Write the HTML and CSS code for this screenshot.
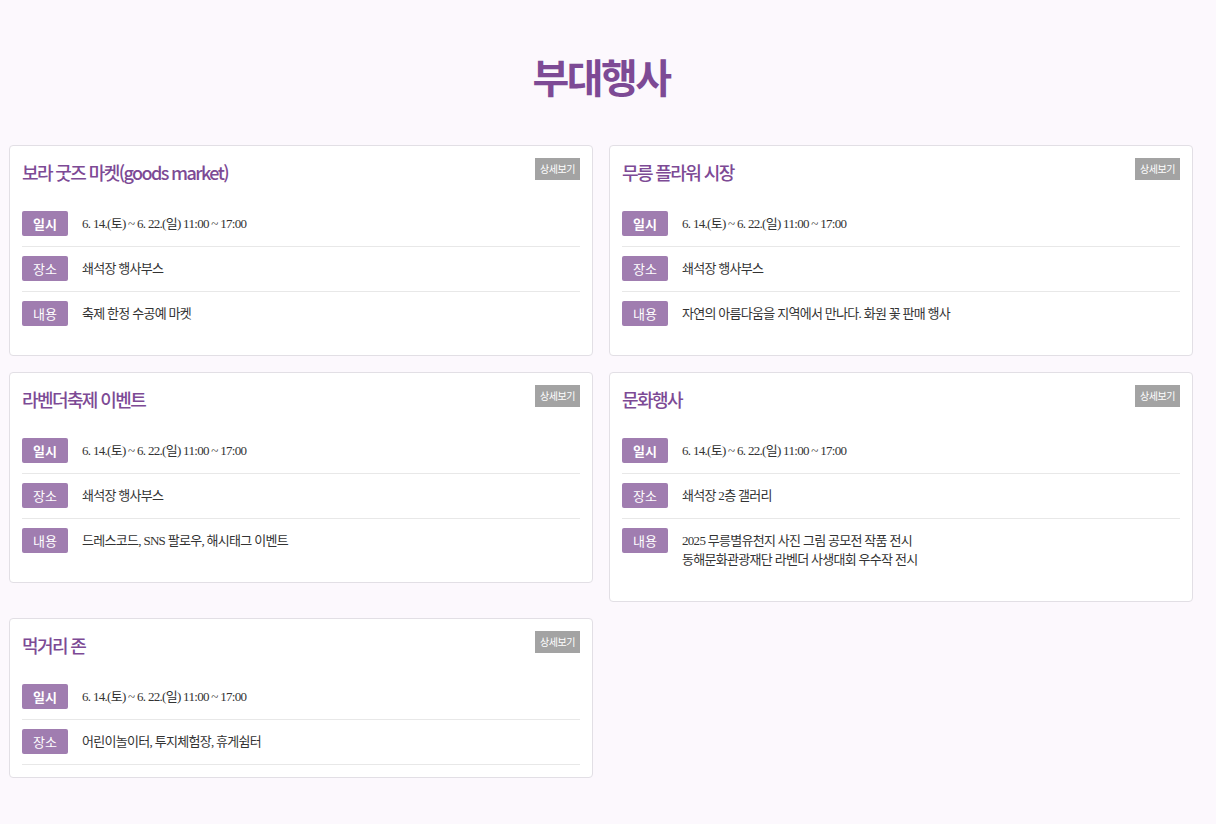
FILE: index.html
```html
<!DOCTYPE html>
<html lang="ko">
<head>
  <meta charset="UTF-8">
  <meta name="viewport" content="width=device-width, initial-scale=1.0">
  <title>부대행사</title>
  <link rel="stylesheet" href="styles.css">
</head>
<body>
  <div class="wrap">
    <h2 class="page-title">부대행사</h2>

    <div class="event-grid">
      <!-- 보라 굿즈 마켓 -->
      <div class="event-card">
        <div class="event-head">
          <h3>보라 굿즈 마켓(goods market)</h3>
          <a href="#" class="more-btn">상세보기</a>
        </div>
        <ul class="event-info">
          <li><span class="label label-strong">일시</span><p>6. 14.(토) ~ 6. 22.(일) 11:00 ~ 17:00</p></li>
          <li><span class="label">장소</span><p>쇄석장 행사부스</p></li>
          <li class="last"><span class="label">내용</span><p>축제 한정 수공예 마켓</p></li>
        </ul>
      </div>

      <!-- 무릉 플라워 시장 -->
      <div class="event-card">
        <div class="event-head">
          <h3>무릉 플라워 시장</h3>
          <a href="#" class="more-btn">상세보기</a>
        </div>
        <ul class="event-info">
          <li><span class="label label-strong">일시</span><p>6. 14.(토) ~ 6. 22.(일) 11:00 ~ 17:00</p></li>
          <li><span class="label">장소</span><p>쇄석장 행사부스</p></li>
          <li class="last"><span class="label">내용</span><p>자연의 아름다움을 지역에서 만나다. 화원 꽃 판매 행사</p></li>
        </ul>
      </div>

      <!-- 라벤더축제 이벤트 -->
      <div class="event-card">
        <div class="event-head">
          <h3>라벤더축제 이벤트</h3>
          <a href="#" class="more-btn">상세보기</a>
        </div>
        <ul class="event-info">
          <li><span class="label label-strong">일시</span><p>6. 14.(토) ~ 6. 22.(일) 11:00 ~ 17:00</p></li>
          <li><span class="label">장소</span><p>쇄석장 행사부스</p></li>
          <li class="last"><span class="label">내용</span><p>드레스코드, SNS 팔로우, 해시태그 이벤트</p></li>
        </ul>
      </div>

      <!-- 문화행사 -->
      <div class="event-card">
        <div class="event-head">
          <h3>문화행사</h3>
          <a href="#" class="more-btn">상세보기</a>
        </div>
        <ul class="event-info">
          <li><span class="label label-strong">일시</span><p>6. 14.(토) ~ 6. 22.(일) 11:00 ~ 17:00</p></li>
          <li><span class="label">장소</span><p>쇄석장 2층 갤러리</p></li>
          <li class="last"><span class="label">내용</span><p>2025 무릉별유천지 사진 그림 공모전 작품 전시<br>동해문화관광재단 라벤더 사생대회 우수작 전시</p></li>
        </ul>
      </div>

      <!-- 먹거리 존 -->
      <div class="event-card">
        <div class="event-head">
          <h3>먹거리 존</h3>
          <a href="#" class="more-btn">상세보기</a>
        </div>
        <ul class="event-info">
          <li><span class="label label-strong">일시</span><p>6. 14.(토) ~ 6. 22.(일) 11:00 ~ 17:00</p></li>
          <li><span class="label">장소</span><p>어린이놀이터, 투지체험장, 휴게쉼터</p></li>
        </ul>
      </div>
    </div>
  </div>
</body>
</html>
```

FILE: styles.css
```css
/* 기본 설정 */
body {
  margin: 0;
  background: #fcf8fd;
  font-family: "Noto Sans CJK KR", "Noto Sans", sans-serif;
  color: #333;
}
.wrap {
  width: 1184px;
  padding: 0 0 40px 9px;
}
/* 페이지 제목 */
.page-title {
  margin: 0;
  padding: 50px 0 43px;
  text-align: center;
  font-size: 40px;
  font-weight: 700;
  line-height: 52px;
  letter-spacing: -2.5px;
  color: #7d4a95;
}
/* 카드 2열 배치 */
.event-grid {
  display: grid;
  grid-template-columns: 584px 584px;
  column-gap: 16px;
  row-gap: 16px;
  align-items: start;
}
.event-card {
  background: #fff;
  border: 1px solid #e2dfe5;
  border-radius: 4px;
  padding: 12px;
}
.event-head {
  display: flex;
  justify-content: space-between;
  align-items: flex-start;
  margin-bottom: 18px;
}
.event-head h3 {
  margin: 2px 0 0;
  font-size: 18px;
  font-weight: 500;
  line-height: 24px;
  letter-spacing: -1.6px;
  color: #7d4a95;
}
.more-btn {
  display: block;
  width: 45px;
  height: 22px;
  line-height: 22px;
  text-align: center;
  background: #a3a3a3;
  color: #fff;
  font-size: 10px;
  letter-spacing: -0.5px;
  text-decoration: none;
}
/* 일시 / 장소 / 내용 */
.event-info {
  list-style: none;
  margin: 0;
  padding: 0;
}
.event-info li {
  display: flex;
  align-items: flex-start;
  padding: 9px 0 10px;
  border-bottom: 1px solid #e8e8e8;
}
.event-info li.last {
  border-bottom: none;
  padding-bottom: 17px;
}
.label {
  flex: none;
  width: 46px;
  height: 25px;
  line-height: 25px;
  margin-right: 14px;
  text-align: center;
  background: #a07db0;
  color: #fff;
  font-size: 13px;
  border-radius: 2px;
}
.label-strong {
  font-weight: 700;
}
.event-info p {
  margin: 3px 0;
  font-family: "Liberation Serif", "Noto Sans CJK KR", serif;
  font-size: 13px;
  line-height: 19px;
  letter-spacing: -0.7px;
  color: #333;
}
```
